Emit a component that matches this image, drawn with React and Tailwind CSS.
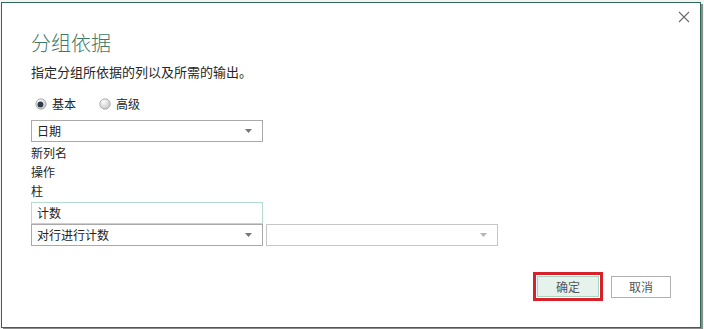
const FONT = { fontFamily: '"Microsoft YaHei", "Noto Sans CJK SC", "Noto Sans", sans-serif' };

const Arrow = ({ color = "#777" }) => (
  <svg width="7" height="4" viewBox="0 0 7 4" className="shrink-0">
    <path d="M0 0 H7 L3.5 4 Z" fill={color} />
  </svg>
);

const Radio = ({ checked }) => (
  <svg width="12" height="12" viewBox="0 0 12 12" className="shrink-0">
    <defs>
      <radialGradient id={checked ? "rg1" : "rg2"} cx="35%" cy="30%" r="75%">
        <stop offset="0%" stopColor="#ffffff" />
        <stop offset="100%" stopColor="#c4c4c4" />
      </radialGradient>
    </defs>
    <circle cx="6" cy="6" r="5.2" fill={`url(#${checked ? "rg1" : "rg2"})`} stroke="#a0a0a0" strokeWidth="0.8" />
    {checked && <circle cx="5.4" cy="6.4" r="2.9" fill="#2f3b4a" />}
  </svg>
);

const Select = ({ value, muted }) => (
  <div
    className={`flex h-[22px] w-[232px] items-center justify-between border bg-white pl-[5px] pr-[10px] text-[12px] text-[#222] ${
      muted ? "border-[#c6c6c6]" : "border-[#a9a9a9]"
    }`}
  >
    <span className="leading-none">{value}</span>
    <Arrow color={muted ? "#b5b5b5" : "#777"} />
  </div>
);

export default function App() {
  return (
    <div className="h-[329px] w-[704px] bg-[#f3f3f3] pl-[1px] pt-[2px]" style={FONT}>
      <div className="relative flex h-[326px] w-[700px] flex-col border border-[#2c6a55] bg-white px-[29px] pt-[27px] shadow-[2px_2px_0_#8c8c8c]">
        {/* close */}
        <button className="absolute right-[9px] top-[7px] flex h-[14px] w-[14px] items-center justify-center">
          <svg width="12" height="12" viewBox="0 0 12 12">
            <path d="M1 1 L11 11 M11 1 L1 11" stroke="#6b6b6b" strokeWidth="1.1" />
          </svg>
        </button>

        <h1 className="h-[26px] text-[20px] font-light leading-[26px] text-[#3f7a65]">分组依据</h1>
        <p className="mt-[7px] h-[18px] text-[13px] leading-[18px] text-[#262626]">
          指定分组所依据的列以及所需的输出。
        </p>

        {/* mode */}
        <div className="ml-[4px] mt-[14px] flex h-[18px] items-center text-[12px] text-[#262626]">
          <Radio checked />
          <span className="ml-[5px]">基本</span>
          <span className="ml-[23px]">
            <Radio />
          </span>
          <span className="ml-[5px]">高级</span>
        </div>

        <div className="mt-[7px]">
          <Select value="日期" />
        </div>

        <div className="mt-[1px] flex flex-col text-[12px] text-[#262626]">
          <span className="h-[19px] leading-[19px]">新列名</span>
          <span className="h-[19px] leading-[19px]">操作</span>
          <span className="h-[19px] leading-[19px]">柱</span>
        </div>

        <div className="mt-[2px] flex h-[22px] w-[232px] items-center border border-[#b3dccd] bg-white pl-[5px] text-[12px] text-[#222]">
          计数
        </div>
        <div className="flex gap-[3px]">
          <Select value="对行进行计数" />
          <Select value="" muted />
        </div>

        {/* buttons */}
        <div className="mt-[26px] flex items-center justify-end gap-[8px] text-[12px] text-[#555]">
          <div className="border-[3px] border-[#d8222b] p-[1px]">
            <button className="flex h-[21px] w-[62px] items-center justify-center border border-[#a8d4c2] bg-[#e6f3ed]">
              确定
            </button>
          </div>
          <button className="flex h-[22px] w-[60px] items-center justify-center border border-[#b0b0b0] bg-white">
            取消
          </button>
        </div>
      </div>
    </div>
  );
}
